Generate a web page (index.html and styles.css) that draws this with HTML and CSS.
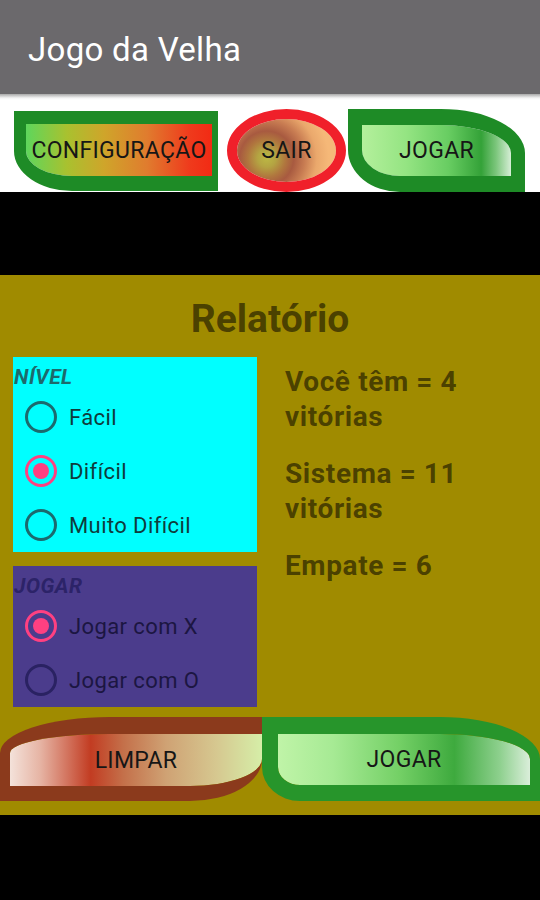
FILE: index.html
```html
<!DOCTYPE html>
<html lang="pt">
<head>
  <meta charset="UTF-8" />
  <title>Jogo da Velha</title>
  <link rel="stylesheet" href="styles.css">
</head>
<body>
  <header class="appbar">
    <h1>Jogo da Velha</h1>
  </header>

  <div class="toolbar">
    <button class="btn btn-config">CONFIGURAÇÃO</button>
    <button class="btn btn-sair">SAIR</button>
    <button class="btn btn-play-top">JOGAR</button>
  </div>

  <div class="band"></div>

  <main class="panel">
    <h2>Relatório</h2>
    <div class="report">
      <div class="options">
        <div class="group nivel">
          <div class="legend">NÍVEL</div>
          <label class="row"><span class="radio"></span>Fácil</label>
          <label class="row"><span class="radio on"></span>Difícil</label>
          <label class="row"><span class="radio"></span>Muito Difícil</label>
        </div>
        <div class="group jogar">
          <div class="legend">JOGAR</div>
          <label class="row"><span class="radio on"></span>Jogar com X</label>
          <label class="row"><span class="radio"></span>Jogar com O</label>
        </div>
      </div>
      <div class="stats">
        <p>Você têm = 4<br>vitórias</p>
        <p>Sistema = 11<br>vitórias</p>
        <p>Empate = 6</p>
      </div>
    </div>
    <div class="actions">
      <button class="btn btn-limpar">LIMPAR</button>
      <button class="btn btn-play">JOGAR</button>
    </div>
  </main>
</body>
</html>
```

FILE: styles.css
```css
body { margin:0; background:#000; font-family:Roboto, "Noto Sans", sans-serif; }

.appbar { height:94px; background:#6b696c; }
.appbar h1 { margin:0; padding:5px 0 0 28px; line-height:89px; font-size:33px; letter-spacing:0.3px; font-weight:400; color:#fff; }

.toolbar { height:98px; box-sizing:border-box; padding-left:14px; display:flex; align-items:flex-end; background:linear-gradient(#a8a8a8, #f4f4f4 4px, #fff 6px); }
.band { height:83px; }

.btn { font-family:inherit; font-size:23px; letter-spacing:0.3px; color:#161616; padding:0; box-sizing:border-box; cursor:pointer; }

.btn-config { width:204px; height:80px; margin-bottom:1px; border:12px solid #1e8b26; border-top-width:13px; border-right-width:6px; border-bottom-width:15px; border-radius:0 0 0 58px / 0 0 0 40px; background:linear-gradient(90deg, #5ed65c 0%, #a9c12f 22%, #cfa52a 42%, #e07c2e 65%, #ef3a1c 88%, #f22a14 100%) padding-box; }
.btn-sair { width:119px; height:83px; margin-left:9px; border:10px solid #f0202a; border-radius:50%; background:radial-gradient(circle at 30% 62%, #bcb844 0, #b4a442 9px, #b0763e 19px, #a85a40 27px, #c87c52 38px, #eaa86c 50px, #f5b878 62px) padding-box; }
.btn-play-top { width:177px; height:83px; margin-left:2px; border:16px solid #1e8b26; border-left-width:14px; border-right-width:14px; border-radius:0 84px 0 52px / 0 44px 0 42px; background:linear-gradient(90deg, #b4f09c 0%, #94e482 30%, #68cd62 58%, #34a238 80%, #7cc67c 90%, #d6eed6 100%) padding-box; }

.panel { height:540px; box-sizing:border-box; padding-top:22px; background:#a08b00; color:rgba(0,0,0,0.55); }
.panel h2 { margin:0; font-size:39px; line-height:44px; font-weight:700; text-align:center; }

.report { display:flex; margin-top:16px; padding-left:13px; }
.options { width:244px; display:flex; flex-direction:column; gap:14px; }
.group { padding-top:8px; }
.nivel { background:#00ffff; color:#0f3c3c; }
.jogar { background:#4b3c8c; color:#1c1642; }
.legend { padding-left:1px; font-size:21px; line-height:25px; letter-spacing:0.5px; font-style:italic; font-weight:700; }
.nivel .legend { color:#1d6a6c; }
.jogar .legend { color:#2c2368; }

.row { height:54px; display:flex; align-items:center; gap:12px; padding-left:12px; font-size:22px; letter-spacing:0.4px; }
.radio { width:32px; height:32px; box-sizing:border-box; border:3px solid; border-radius:50%; display:flex; align-items:center; justify-content:center; }
.nivel .radio { border-color:#1b6a6e; }
.jogar .radio { border-color:#2a2262; }
.radio.on { border-color:#ff4081 !important; }
.radio.on::after { content:""; width:16px; height:16px; border-radius:50%; background:#ff4081; }

.stats { margin-left:28px; padding-top:7px; font-size:28px; line-height:35px; letter-spacing:0.6px; font-weight:700; }
.stats p { margin:0 0 22px; }

.actions { display:flex; margin-top:10px; }
.btn-limpar { width:262px; height:84px; border:17px solid #8b3a1c; border-left-width:10px; border-right-width:0; border-bottom-width:15px; border-radius:110px 0 72px 0 / 36px 0 42px 0; background:linear-gradient(90deg, #f4e2da 0%, #e6b4a4 12%, #c23c22 32%, #c4704a 45%, #cfa274 62%, #d6c890 82%, #d6eea8 100%) padding-box; }
.btn-play { width:278px; height:84px; border:17px solid #27952b; border-left-width:16px; border-right-width:10px; border-bottom-width:16px; border-radius:0 100px 0 38px / 0 42px 0 34px; background:linear-gradient(90deg, #c0f4a8 0%, #a6ea94 22%, #74d066 48%, #3eaa3e 70%, #8ed08e 88%, #daeeda 100%) padding-box; }
```
